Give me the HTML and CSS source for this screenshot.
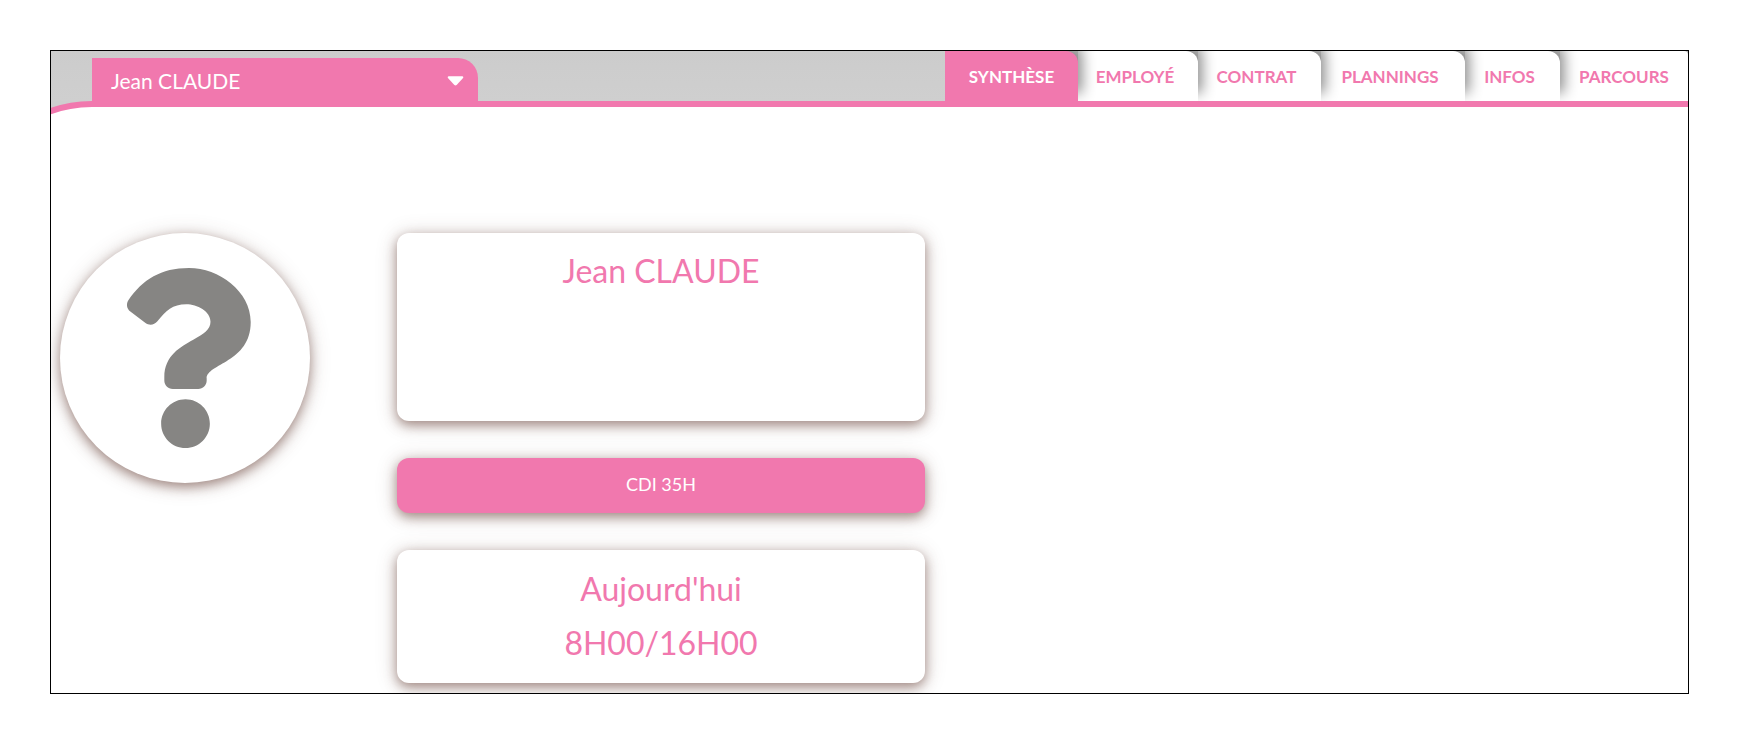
FILE: index.html
```html
<!DOCTYPE html>
<html lang="fr">
<head>
<meta charset="utf-8">
<title>Jean CLAUDE</title>
<link rel="stylesheet" href="styles.css">
</head>
<body>
<div class="frame">
  <header class="bar">
    <svg class="bar-curve" viewBox="0 0 41 16" aria-hidden="true">
      <path class="curve-fill" d="M0 16V10Q18 3 41 3V16Z"/>
      <path class="curve-line" d="M-2 10.800Q18 3 42 3"/>
    </svg>
    <div class="picker">
      <select class="picker-select" aria-label="Employé">
        <option>Jean CLAUDE</option>
      </select>
      <svg class="picker-caret" viewBox="0 0 18 10" aria-hidden="true"><path d="M1.6 0h14.8q1.6.5.6 1.8L10.200 9.200q-1.200 1-2.400 0L1 1.800Q0 .5 1.600 0Z"/></svg>
    </div>
    <nav class="tabs" aria-label="Sections">
      <button class="tab tab-active" type="button">SYNTHÈSE</button>
      <button class="tab" type="button">EMPLOYÉ</button>
      <button class="tab" type="button">CONTRAT</button>
      <button class="tab" type="button">PLANNINGS</button>
      <button class="tab" type="button">INFOS</button>
      <button class="tab" type="button">PARCOURS</button>
    </nav>
  </header>
  <main class="content">
    <div class="avatar">
      <svg class="avatar-icon" viewBox="0 0 384 512" role="img" aria-label="Photo absente"><path d="M202.021 0C122.202 0 70.503 32.703 29.914 91.026c-7.363 10.58-5.093 25.086 5.178 32.874l43.138 32.709c10.373 7.865 25.132 6.026 33.253-4.148 25.049-31.381 43.63-49.449 82.757-49.449 30.764 0 68.816 19.799 68.816 49.631 0 22.552-18.617 34.134-48.993 51.164-35.423 19.86-82.299 44.576-82.299 106.405V320c0 13.255 10.745 24 24 24h72.471c13.255 0 24-10.745 24-24v-5.773c0-42.86 125.268-44.645 125.268-160.627C377.504 66.256 286.902 0 202.021 0zM192 373.459c-38.196 0-69.271 31.075-69.271 69.271 0 38.195 31.075 69.27 69.271 69.27s69.271-31.075 69.271-69.271-31.075-69.27-69.271-69.27z"/></svg>
    </div>
    <div class="cards">
      <section class="card card-name"><h1 class="title">Jean CLAUDE</h1></section>
      <section class="card card-contract">CDI 35H</section>
      <section class="card card-today">
        <h2 class="title">Aujourd'hui</h2>
        <p class="title">8H00/16H00</p>
      </section>
    </div>
  </main>
</div>
</body>
</html>
```
FILE: styles.css
```css
:root {
  --pink: #f178ae;
}

* {
  box-sizing: border-box;
}

body {
  margin: 0;
  padding: 50px;
  background: #fff;
  font-family: Lato, "Open Sans", sans-serif;
}

.frame {
  min-height: calc(100vh - 100px);
  border: 1px solid #000;
  background: #fff;
  overflow: hidden;
}

.bar {
  display: flex;
  align-items: flex-end;
  height: 56px;
  background: linear-gradient(#ccc, #cfcfcf 50px, var(--pink) 50px);
}

.bar-curve {
  flex: none;
  width: 41px;
  height: 16px;
  margin-bottom: -10px;
  overflow: hidden;
  background: #cecece;
}

.curve-fill {
  fill: #fff;
}

.curve-line {
  fill: none;
  stroke: var(--pink);
  stroke-width: 6;
}

.picker {
  display: grid;
  align-items: center;
  width: 386px;
  height: 49px;
  margin-right: auto;
  border-radius: 0 20px 0 0;
  background: var(--pink);
}

.picker-select,
.picker-caret {
  grid-area: 1 / 1;
}

.picker-select {
  appearance: none;
  width: 100%;
  height: 49px;
  padding: 0 48px 4px 19px;
  border: 0;
  background: transparent;
  color: #fff;
  font: 21px Lato, "Open Sans", sans-serif;
}

.picker-caret {
  justify-self: end;
  width: 17px;
  height: 10px;
  margin: 0 14px 4px 0;
  fill: #fff;
  pointer-events: none;
}

.tabs {
  display: grid;
  grid-template-columns: 133fr 120fr 123fr 144fr 95fr 128fr;
  align-self: flex-start;
  width: 743px;
  height: 50px;
  overflow: hidden;
  background: #fff;
}

.tab {
  position: relative;
  padding: 0 6px 0 0;
  border: 0;
  border-radius: 0 12px 0 0;
  background: #fff;
  box-shadow: 4px -8px 14px rgba(0, 0, 0, 0.45);
  color: var(--pink);
  font: bold 17px Lato, "Open Sans", sans-serif;
}

.tab:nth-child(1) { z-index: 6; }
.tab:nth-child(2) { z-index: 5; }
.tab:nth-child(3) { z-index: 4; }
.tab:nth-child(4) { z-index: 3; }
.tab:nth-child(5) { z-index: 2; }

.tab:last-child {
  padding: 0;
  border-radius: 0 4px 0 0;
}

.tab-active {
  padding: 0;
  background: var(--pink);
  color: #fff;
}

.content {
  display: grid;
  grid-template-columns: 346fr 528fr 763fr;
  align-items: start;
  padding: 126px 0 10px;
}

.avatar {
  display: grid;
  place-items: center;
  width: 250px;
  height: 250px;
  margin-left: 9px;
  border-radius: 50%;
  background: #fff;
}

.avatar,
.card {
  box-shadow: 0 4px 12px rgba(90, 45, 35, 0.5), 0 2px 22px rgba(90, 60, 50, 0.2);
}

.avatar-icon {
  width: 135px;
  height: 180px;
  fill: #868583;
}

.cards {
  display: grid;
  gap: 37px;
}

.card {
  border-radius: 12px;
  background: #fff;
  color: var(--pink);
  text-align: center;
}

.card-name {
  min-height: 188px;
  padding-top: 14px;
}

.card-contract {
  padding: 14px 0 17px;
  background: var(--pink);
  color: #fff;
  font-size: 18px;
  line-height: 24px;
}

.card-today {
  padding: 12px 0 13px;
}

.title {
  margin: 0;
  font-size: 32px;
  font-weight: 400;
  line-height: 48px;
}

.card-today .title {
  line-height: 54px;
}
```
